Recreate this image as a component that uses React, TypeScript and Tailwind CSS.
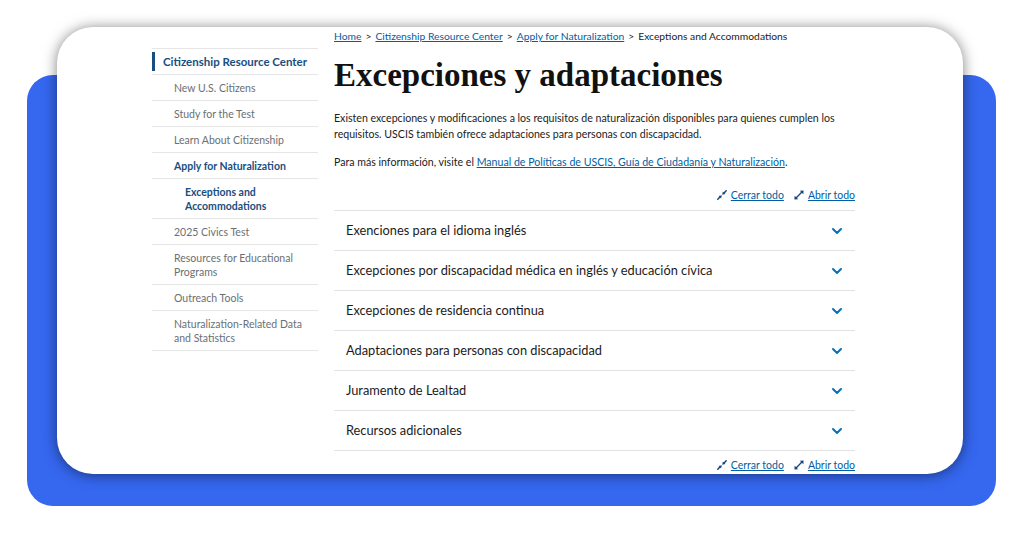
import React from 'react';
import { ChevronDown } from 'lucide-react';

type NavItem = { label: React.ReactNode; level: 1 | 2 | 3; active?: boolean };

const navItems: NavItem[] = [
  { label: 'Citizenship Resource Center', level: 1, active: true },
  { label: 'New U.S. Citizens', level: 2 },
  { label: 'Study for the Test', level: 2 },
  { label: 'Learn About Citizenship', level: 2 },
  { label: 'Apply for Naturalization', level: 2, active: true },
  { label: <>Exceptions and<br />Accommodations</>, level: 3, active: true },
  { label: '2025 Civics Test', level: 2 },
  { label: <>Resources for Educational<br />Programs</>, level: 2 },
  { label: 'Outreach Tools', level: 2 },
  { label: <>Naturalization-Related Data<br />and Statistics</>, level: 2 },
];

const sections = [
  'Exenciones para el idioma inglés',
  'Excepciones por discapacidad médica en inglés y educación cívica',
  'Excepciones de residencia continua',
  'Adaptaciones para personas con discapacidad',
  'Juramento de Lealtad',
  'Recursos adicionales',
];

// two arrowheads meeting in the middle of the diagonal
const CompressIcon = () => (
  <svg width="10" height="10" viewBox="0 0 12 12" className="text-[#1a4480]">
    <path d="M1 11 L3.2 8.8 M11 1 L8.8 3.2" stroke="currentColor" strokeWidth="1.8" strokeLinecap="round" />
    <path d="M5.8 6.2 L4.9 10.2 L1.8 7.1 Z" fill="currentColor" />
    <path d="M6.2 5.8 L10.2 4.9 L7.1 1.8 Z" fill="currentColor" />
  </svg>
);

// diagonal line with arrowheads pointing out at both ends
const ExpandIcon = () => (
  <svg width="10" height="10" viewBox="0 0 12 12" className="text-[#1a4480]">
    <path d="M2.5 9.5 L9.5 2.5" stroke="currentColor" strokeWidth="1.6" strokeLinecap="round" />
    <path d="M11.5 0.5 L11.2 5 L7 0.8 Z" fill="currentColor" />
    <path d="M0.5 11.5 L0.8 7 L5 11.2 Z" fill="currentColor" />
  </svg>
);

const ToggleLinks = () => (
  <div className="flex justify-end items-center gap-[10px] text-[10.5px] leading-[14px]">
    <a className="flex items-center gap-[4px] text-[#005ea2] underline">
      <CompressIcon />
      Cerrar todo
    </a>
    <a className="flex items-center gap-[4px] text-[#005ea2] underline">
      <ExpandIcon />
      Abrir todo
    </a>
  </div>
);

const Sidebar = () => (
  <nav className="w-[166px] mt-[21px] border-t border-[#e6e6e6] font-['Lato',sans-serif]">
    {navItems.map((item, i) => {
      const pad = item.level === 1 ? 'pl-[11px]' : item.level === 2 ? 'pl-[22px]' : 'pl-[33px]';
      const tone = item.active ? 'text-[#1a4e80] font-bold' : 'text-[#6b6f73]';
      const size = item.level === 1 ? 'text-[11.5px]' : 'text-[10.5px]';
      return (
        <div key={i} className={`relative border-b border-[#e6e6e6] pt-[6px] pb-[5px] ${pad}`}>
          {item.level === 1 && <span className="absolute left-0 top-[3px] bottom-[3px] w-[3px] bg-[#1a4e80]" />}
          <span className={`block leading-[14px] ${size} ${tone}`}>{item.label}</span>
        </div>
      );
    })}
  </nav>
);

const MainContent = () => (
  <main className="w-[521px] pt-[2px] font-['Lato',sans-serif] text-[#1b1b1b]">
    <div className="flex items-center gap-[4px] text-[10.3px] leading-[14px]">
      <a className="text-[#005ea2] underline">Home</a>
      <span>&gt;</span>
      <a className="text-[#005ea2] underline">Citizenship Resource Center</a>
      <span>&gt;</span>
      <a className="text-[#005ea2] underline">Apply for Naturalization</a>
      <span>&gt;</span>
      <span>Exceptions and Accommodations</span>
    </div>

    <h1 className="mt-[13px] font-['Liberation_Serif',serif] font-bold text-[33px] leading-[38px] text-[#111]">
      Excepciones y adaptaciones
    </h1>

    <p className="mt-[16px] text-[10.6px] leading-[16px]">
      Existen excepciones y modificaciones a los requisitos de naturalización disponibles para quienes cumplen los
      requisitos. USCIS también ofrece adaptaciones para personas con discapacidad.
    </p>
    <p className="mt-[12px] text-[10.6px] leading-[16px]">
      Para más información, visite el{' '}
      <a className="text-[#005ea2] underline">Manual de Políticas de USCIS, Guía de Ciudadanía y Naturalización</a>.
    </p>

    <div className="mt-[18px]">
      <ToggleLinks />
    </div>

    <div className="mt-[8px] border-t border-[#e3e3e3]">
      {sections.map((s) => (
        <div key={s} className="h-[40px] flex items-center justify-between border-b border-[#e3e3e3] pl-[12px] pr-[10px]">
          <span className="text-[12.8px] text-[#1b1b1b]">{s}</span>
          <ChevronDown size={16} strokeWidth={3} className="text-[#0b6fb4]" />
        </div>
      ))}
    </div>

    <div className="mt-[7px]">
      <ToggleLinks />
    </div>
  </main>
);

export default function App() {
  return (
    <div className="relative w-full h-[536px] bg-white overflow-hidden">
      <div className="absolute left-[27px] top-[75px] w-[969px] h-[431px] rounded-[26px] bg-[#3567ef]" />
      <div className="relative ml-[57px] mt-[27px] w-[906px] h-[447px] rounded-[36px] bg-white overflow-hidden shadow-[0_1px_14px_rgba(0,0,0,0.5)]">
        <div className="flex gap-[16px] pl-[95px]">
          <Sidebar />
          <MainContent />
        </div>
      </div>
    </div>
  );
}
